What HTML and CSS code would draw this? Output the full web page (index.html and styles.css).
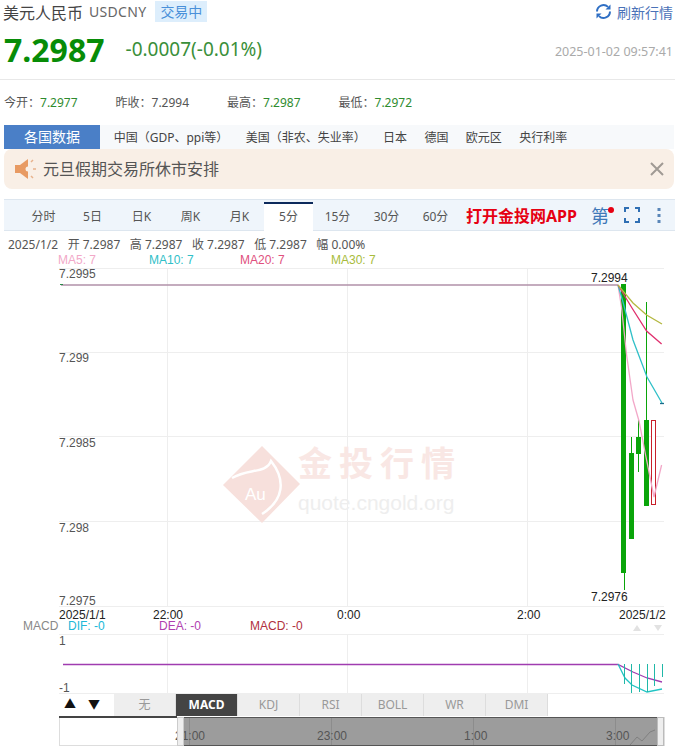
FILE: index.html
```html
<!DOCTYPE html>
<html lang="en">
<head>
  <meta charset="UTF-8" />
  <title>美元人民币 USDCNY</title>
  <link rel="stylesheet" href="styles.css">
</head>
<body>

  <div class="title-row">
    <span class="name">美元人民币</span>
    <span class="code">USDCNY</span>
    <span class="status">交易中</span>
    <span class="refresh">
      <svg width="17" height="17" viewBox="0 0 17 17" fill="none">
        <path d="M2 8.5a6.5 6.5 0 0 1 11-4.6" stroke="#2f6fc4" stroke-width="2"/>
        <path d="M15 8.5a6.5 6.5 0 0 1-11 4.6" stroke="#2f6fc4" stroke-width="2"/>
        <path d="M15.5 1.5v5h-5z" fill="#2f6fc4"/>
        <path d="M1.500 15.500v-5h5z" fill="#2f6fc4"/>
      </svg>
      刷新行情
    </span>
  </div>

  <div class="price-row">
    <span class="price">7.2987</span>
    <span class="change">-0.0007(-0.01%)</span>
    <span class="time">2025-01-02 09:57:41</span>
  </div>

  <div class="stats-row">
    <div class="stat">今开：<em>7.2977</em></div>
    <div class="stat">昨收：<span>7.2994</span></div>
    <div class="stat">最高：<em>7.2987</em></div>
    <div class="stat">最低：<em>7.2972</em></div>
  </div>

  <div class="data-tabs">
    <div class="data-title">各国数据</div>
    <div class="data-tab">中国（GDP、ppi等）</div>
    <div class="data-tab">美国（非农、失业率）</div>
    <div class="data-tab">日本</div>
    <div class="data-tab">德国</div>
    <div class="data-tab">欧元区</div>
    <div class="data-tab">央行利率</div>
  </div>

  <div class="notice">
    <svg class="notice-icon" width="23" height="24" viewBox="0 0 23 24">
      <rect x="1" y="8" width="5" height="8" fill="#e89a62"/>
      <path d="M6 8l8-6v20l-8-6z" fill="#e89a62"/>
      <circle cx="14" cy="12" r="2.500" fill="#f9efe6"/>
      <path d="M17 5l2-2M19 12h3M17 19l2 2" stroke="#e8b28c" stroke-width="1.500"/>
    </svg>
    <span class="notice-text">元旦假期交易所休市安排</span>
    <svg class="notice-close" width="14" height="14" viewBox="0 0 14 14">
      <path d="M1 1l12 12M13 1L1 13" stroke="#a09a94" stroke-width="2"/>
    </svg>
  </div>

  <div class="toolbar">
    <div class="period">分时</div>
    <div class="period">5日</div>
    <div class="period">日K</div>
    <div class="period">周K</div>
    <div class="period">月K</div>
    <div class="period active">5分</div>
    <div class="period">15分</div>
    <div class="period">30分</div>
    <div class="period">60分</div>
    <div class="app-link">打开金投网APP</div>
    <div class="ce">第<i class="dot"></i></div>
    <svg class="full" width="16" height="16" viewBox="0 0 16 16" fill="none">
      <path d="M1 5V1h4M11 1h4v4M15 11v4h-4M5 15H1v-4" stroke="#2f6fb4" stroke-width="2"/>
    </svg>
    <svg class="more" width="4" height="16" viewBox="0 0 4 16">
      <rect x="0.500" y="1" width="3" height="3" fill="#5a86b8"/>
      <rect x="0.500" y="7" width="3" height="3" fill="#5a86b8"/>
      <rect x="0.500" y="13" width="3" height="3" fill="#5a86b8"/>
    </svg>
  </div>

  <div class="info-row">
    <span class="info-date">2025/1/2</span>
    <span>开 7.2987</span>
    <span>高 7.2987</span>
    <span>收 7.2987</span>
    <span>低 7.2987</span>
    <span>幅 0.00%</span>
  </div>

  <div class="ma-row">
    <span class="ma5">MA5: 7</span>
    <span class="ma10">MA10: 7</span>
    <span class="ma20">MA20: 7</span>
    <span class="ma30">MA30: 7</span>
  </div>

  <!-- viewBox uses page coordinates, easier to read off the chart -->
  <svg class="chart" width="675" height="426" viewBox="0 268 675 426">
    <g class="grid">
      <path d="M59 268.500H664M59 352.500H664M59 436.500H664M59 521.500H664M59 606.500H664M59 634.500H664M59 693.500H664"/>
      <path d="M167.500 268V606M347.500 268V606M527.500 268V606M167.500 634V693M347.500 634V693M527.500 634V693"/>
    </g>

    <g class="wm">
      <path d="M262 446L300 484L262 523L223 485Z" fill="#f7e0dc"/>
      <path d="M232 478C248 468 266 474 271 461C286 480 284 500 262 514" fill="none" stroke="#fff" stroke-width="2.500"/>
      <text x="245" y="500" class="wm-au">Au</text>
      <text x="298" y="476" class="wm-cn">金投行情</text>
      <text x="298" y="510" class="wm-url">quote.cngold.org</text>
    </g>

    <path class="flat" d="M61 285H618"/>
    <path d="M60 284.500h3" stroke="#2a8a4a" fill="none"/>

    <g fill="#0aa50a">
      <rect x="621" y="284" width="5" height="289"/>
      <rect x="624" y="573" width="1" height="17"/>
      <rect x="629" y="453" width="5" height="86"/>
      <rect x="631" y="437" width="1" height="16"/>
      <rect x="636" y="437" width="5" height="17"/>
      <rect x="638" y="420" width="1" height="52"/>
      <rect x="644" y="420" width="5" height="86"/>
      <rect x="646" y="302" width="1" height="118"/>
    </g>
    <rect x="651.500" y="420.500" width="4" height="84" fill="#fff" stroke="#c8202a"/>

    <g fill="none" stroke-width="1.300">
      <path d="M618 285L621.600 308L626.600 355L633 400L639 421L645.600 455L654 497L661.600 465" stroke="#f2a8c8"/>
      <path d="M618 285L623 302L633 340L647 377L662 403" stroke="#30c0c8"/>
      <path d="M618 285L632 308L646.600 331L661.600 344" stroke="#e0306e"/>
      <path d="M618 285L633 303L646.600 315L662 324" stroke="#b4b840"/>
      <path d="M660 403.500h4" stroke="#1a6a8a"/>
    </g>

    <text x="59" y="278" class="axis">7.2995</text>
    <text x="59" y="362" class="axis">7.299</text>
    <text x="59" y="447" class="axis">7.2985</text>
    <text x="59" y="532" class="axis">7.298</text>
    <text x="59" y="605" class="axis">7.2975</text>
    <text x="591" y="282" class="mark">7.2994</text>
    <text x="591" y="601" class="mark">7.2976</text>

    <text x="59" y="619" class="mark">2025/1/1</text>
    <text x="153" y="619" class="mark">22:00</text>
    <text x="337" y="619" class="mark">0:00</text>
    <text x="517" y="619" class="mark">2:00</text>
    <text x="619" y="619" class="mark">2025/1/2</text>

    <text x="23" y="630" class="axis macd-name">MACD</text>
    <text x="68" y="630" class="macd-dif">DIF: -0</text>
    <text x="159" y="630" class="macd-dea">DEA: -0</text>
    <text x="250" y="630" class="macd-val">MACD: -0</text>
    <path d="M633 631l4-6 4 6zM654 625h8l-4 6z" fill="#e2e2e2"/>

    <text x="59" y="645" class="axis">1</text>
    <text x="59" y="692" class="axis">-1</text>

    <path d="M63 664.500H618L633 672L647 678L662 682" fill="none" stroke="#a03cb0" stroke-width="1.300"/>
    <path d="M618 664L625 678L632 685L647 692L662 689" fill="none" stroke="#20c4c4" stroke-width="1.300"/>
    <path d="M624.500 664V684M631.500 664V693M639.500 664V692M647.500 664V692M654.500 664V686M662.500 664V677" stroke="#20b8a8" fill="none"/>
  </svg>

  <div class="controls">
    <div class="arrow">▲</div>
    <div class="arrow">▼</div>
    <div class="ind-tabs">
      <div class="ind">无</div>
      <div class="ind on">MACD</div>
      <div class="ind">KDJ</div>
      <div class="ind">RSI</div>
      <div class="ind">BOLL</div>
      <div class="ind">WR</div>
      <div class="ind">DMI</div>
    </div>
  </div>

  <svg class="range" width="675" height="32" viewBox="0 716 675 32">
    <rect x="59.500" y="717.500" width="605" height="28" fill="#fff" stroke="#ddd"/>
    <rect x="59" y="716" width="118" height="2" fill="#444"/>
    <rect x="184" y="717" width="473" height="29" fill="#9c9c9c"/>
    <path d="M184 717.500H657M184 745.500H657" stroke="#555"/>
    <path d="M189.500 718V745M331.500 718V745M473.500 718V745M615.500 718V745" stroke="#8c8c8c"/>
    <path d="M630 745L637 737L642 741L650 732L655 730" fill="none" stroke="#808080"/>
    <text x="175" y="740" class="range-label">21:00</text>
    <text x="317" y="740" class="range-label">23:00</text>
    <text x="464" y="740" class="range-label">1:00</text>
    <text x="606" y="740" class="range-label">3:00</text>
    <rect x="177.500" y="717.500" width="6" height="28" fill="#eee" stroke="#ccc"/>
    <rect x="657.500" y="717.500" width="6" height="28" fill="#eee" stroke="#bbb"/>
  </svg>

</body>
</html>
```

FILE: styles.css
```css
* {
  box-sizing: border-box;
  margin: 0;
  padding: 0;
}

body {
  width: 675px;
  height: 749px;
  overflow: hidden;
  background: #fff;
  color: #555;
  font-family: "Noto Sans", "Noto Sans CJK SC", sans-serif;
  font-size: 12px;
}

svg {
  display: block;
}

em {
  font-style: normal;
  color: #2e8b2e;
}

.title-row {
  display: flex;
  align-items: center;
  height: 26px;
  padding: 0 2px 3px 3px;
}

.name {
  font-size: 16px;
  color: #444;
}

.code {
  margin-left: 6px;
  font-size: 14px;
  letter-spacing: 0.300px;
  color: #666;
}

.status {
  margin-left: 9px;
  padding: 0 5px;
  height: 21px;
  line-height: 21px;
  background: #ddeefc;
  color: #4a90d9;
  font-size: 14px;
}

.refresh {
  margin-left: auto;
  display: flex;
  align-items: center;
  gap: 5px;
  font-size: 14px;
  color: #4a72b8;
}

.price-row {
  display: flex;
  align-items: center;
  height: 54px;
  padding: 0 2px 7px 4px;
  border-bottom: 1px solid #e8e8e8;
}

.price {
  font-size: 32px;
  font-weight: bold;
  color: #078c07;
}

.change {
  margin-left: 21px;
  font-size: 19px;
  color: #3a8f3a;
}

.time {
  margin-left: auto;
  margin-top: 5px;
  font-size: 12.500px;
  color: #aaa;
}

.stats-row {
  display: flex;
  align-items: center;
  height: 45px;
  padding: 0 0 2px 4px;
}

.stat {
  width: 111.500px;
}

.data-tabs {
  display: flex;
  align-items: center;
  height: 24px;
  margin: 0 1px 0 4px;
  background: #f7f9fb;
}

.data-title {
  width: 96px;
  height: 24px;
  line-height: 24px;
  text-align: center;
  background: #4a7fc7;
  color: #fff;
  font-size: 14px;
  margin-right: 5px;
}

.data-tab {
  padding: 0 8.700px;
  color: #444;
}

.notice {
  display: flex;
  align-items: center;
  height: 40px;
  margin: 0 1px 10px 4px;
  padding: 0 10px 0 10px;
  background: #f9efe6;
  border-radius: 8px;
}

.notice-text {
  margin: -2px 0 0 6px;
  font-size: 16px;
  color: #555;
}

.notice-close {
  margin-left: auto;
}

.toolbar {
  display: flex;
  align-items: flex-end;
  height: 32px;
  margin-left: 4px;
  padding-left: 15px;
  background: #eff5fb;
  border-top: 1px solid #dde6ef;
  border-bottom: 1px solid #dde6ef;
}

.period {
  width: 49px;
  height: 27px;
  line-height: 26px;
  text-align: center;
  color: #555;
  margin-bottom: -1px;
}

.period.active {
  background: #fff;
  border-top: 2px solid #0d2a5c;
  height: 29px;
}

.app-link {
  align-self: center;
  margin-left: 6px;
  font-size: 16px;
  font-weight: bold;
  color: #e60012;
}

.ce {
  position: relative;
  align-self: center;
  margin-left: 14px;
  font-size: 18px;
  color: #3f78b8;
}

.dot {
  position: absolute;
  top: 5px;
  right: -5px;
  width: 6px;
  height: 6px;
  border-radius: 50%;
  background: #e60012;
}

.full {
  align-self: center;
  margin-left: 15px;
}

.more {
  align-self: center;
  margin-left: 17px;
}

.info-row {
  display: flex;
  gap: 9.500px;
  height: 22px;
  padding: 7px 0 0 8px;
  line-height: 14px;
}

.ma-row {
  display: flex;
  height: 15px;
  padding-left: 58px;
  line-height: 14px;
  font-family: "Liberation Sans", sans-serif;
}

.ma-row span {
  width: 91px;
}

.ma5 { color: #f2a8c8; }
.ma10 { color: #30c0c8; }
.ma20 { color: #e0507e; }
.ma30 { color: #a8bc3c; }

.grid path {
  stroke: #eee;
  fill: none;
}

.flat {
  stroke: #b090a8;
  stroke-width: 1.500;
  fill: none;
}

.chart {
  overflow: visible;
}

.chart text {
  font-family: "Liberation Sans", sans-serif;
  font-size: 12px;
}

.axis { fill: #555; }
.mark { fill: #222; }
.macd-name { fill: #888; }
.macd-dif { fill: #20b8d8; }
.macd-dea { fill: #b040b0; }
.macd-val { fill: #b03040; }

.chart .wm-au {
  font-size: 17px;
  fill: #fff;
}

.chart .wm-cn {
  font-family: "Noto Sans CJK SC", sans-serif;
  font-size: 34px;
  font-weight: bold;
  letter-spacing: 7px;
  fill: #f9e7e4;
}

.chart .wm-url {
  font-size: 21px;
  fill: #eeeeee;
}

.controls {
  display: flex;
  height: 22px;
  padding-left: 59px;
}

.arrow {
  width: 22px;
  margin-right: 2px;
  line-height: 22px;
  text-align: center;
  color: #111;
  font-size: 12px;
}

.ind-tabs {
  display: flex;
  margin-left: 7px;
}

.ind {
  width: 62px;
  line-height: 22px;
  text-align: center;
  background: #eee;
  color: #999;
  border-right: 1px solid #ddd;
}

.ind.on {
  background: #444;
  color: #fff;
  font-weight: bold;
}

.range text {
  font-family: "Liberation Sans", sans-serif;
  font-size: 12px;
}

.range-label { fill: #555; }
```
